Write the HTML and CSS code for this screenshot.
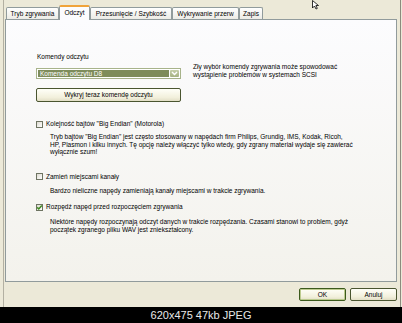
FILE: index.html
```html
<!DOCTYPE html>
<html lang="pl">
<head>
    <meta charset="UTF-8">
    <title>Odczyt</title>
    <link rel="stylesheet" href="styles.css">
</head>
<body>
  <div class="shot">
    <div class="dialog">
        <div class="tabs">
            <div class="tab t-tryb">Tryb zgrywania</div>
            <div class="tab t-odczyt active">Odczyt</div>
            <div class="tab t-przes">Przesunięcie / Szybkość</div>
            <div class="tab t-wykr">Wykrywanie przerw</div>
            <div class="tab t-zapis">Zapis</div>
        </div>

        <div class="panel">
            <div class="top-row">
                <div class="commands">
                    <div class="label">Komendy odczytu</div>
                    <div class="combo">
                        <span class="combo-value">Komenda odczytu D8</span>
                        <span class="combo-btn">
                            <svg width="7" height="5" viewBox="0 0 7 5"><path d="M1 1 L3.5 3.5 L6 1" fill="none" stroke="#fff" stroke-width="1.4"/></svg>
                        </span>
                    </div>
                    <div class="xp-btn wide">Wykryj teraz komendę odczytu</div>
                </div>
                <p class="hint">Zły wybór komendy zgrywania może spowodować<br>wystąpienie problemów w systemach SCSI</p>
            </div>

            <div class="check first"><span class="box"></span>Kolejność bajtów "Big Endian" (Motorola)</div>
            <p class="desc d1">Tryb bajtów "Big Endian" jest często stosowany w napędach firm Philips, Grundig, IMS, Kodak, Ricoh,<br>HP, Plasmon i kilku innych. Tę opcję należy włączyć tylko wtedy, gdy zgrany materiał wydaje się zawierać<br>wyłącznie szum!</p>

            <div class="check second"><span class="box"></span>Zamień miejscami kanały</div>
            <p class="desc d2">Bardzo nieliczne napędy zamieniają kanały miejscami w trakcie zgrywania.</p>

            <div class="check third">
                <span class="box checked">
                    <svg width="7" height="7" viewBox="0 0 7 7"><path d="M1.2 3.4 L2.8 5 L5.8 1.6" fill="none" stroke="#3d8a1e" stroke-width="1.5"/></svg>
                </span>Rozpędź napęd przed rozpoczęciem zgrywania
            </div>
            <p class="desc d3">Niektóre napędy rozpoczynają odczyt danych w trakcie rozpędzania. Czasami stanowi to problem, gdyż<br>początek zgranego pliku WAV jest zniekształcony.</p>
        </div>

        <div class="buttons">
            <div class="xp-btn default">OK</div>
            <div class="xp-btn">Anuluj</div>
        </div>

        <svg class="cursor" width="9" height="10" viewBox="0 0 9 10"><path d="M0.5 0.5 L0.5 8 L2.5 6 L4 9 L5.3 8.4 L3.9 5.5 L6.5 5.5 Z" fill="#fff" stroke="#000" stroke-width="0.8"/></svg>
    </div>
    <div class="caption">620x475 47kb JPEG</div>
  </div>
</body>
</html>
```

FILE: styles.css
```css
    html, body {
        margin: 0;
        padding: 0;
    }

    body {
        font-family: 'Liberation Sans', Arial, sans-serif;
        background-color: #000;
        width: 402px;
        height: 323px;
        overflow: hidden;
    }

    .shot {
        width: 402px;
        background-color: #ece9d8;
    }

    .dialog {
        position: relative;
        height: 307px;
        margin-left: 3px;
        margin-right: 1px;
        border-left: 1px solid #b3b0a2;
        border-right: 1px solid #8d8a7e;
        display: flex;
        flex-direction: column;
        font-size: 6.5px;
        color: #000;
    }

    .tabs {
        display: flex;
        align-items: flex-end;
        height: 14px;
        padding: 5px 0 0 2px;
    }

    .tab {
        box-sizing: border-box;
        height: 12px;
        line-height: 11px;
        text-align: center;
        border: 1px solid #919b9c;
        border-bottom: none;
        border-radius: 2px 2px 0 0;
        background: linear-gradient(#ffffff, #ecebe5);
        white-space: nowrap;
    }

    .t-tryb { width: 53px; }
    .t-odczyt { width: 31px; }
    .t-przes { width: 82px; }
    .t-wykr { width: 67px; }
    .t-zapis { width: 24px; }

    .tab.active {
        position: relative;
        z-index: 2;
        height: 15px;
        line-height: 12px;
        margin-bottom: -1px;
        border-top: 2px solid #f0a33a;
        background: #fcfcfe;
    }

    .panel {
        flex: 0 0 263px;
        height: 263px;
        box-sizing: border-box;
        margin: 0 3px 0 1px;
        border: 1px solid #919b9c;
        background: linear-gradient(#fcfcfe, #f3f2ec);
        padding-left: 30px;
    }

    .top-row {
        display: flex;
        margin-top: 33px;
    }

    .commands {
        width: 145px;
    }

    .label {
        line-height: 8px;
        padding-left: 1px;
    }

    .combo {
        display: flex;
        height: 11px;
        margin-top: 7px;
        box-sizing: border-box;
        border: 1px solid #a7b38a;
        background: #fff;
        padding: 1px;
    }

    .combo-value {
        flex: 1;
        background: #7e8c5a;
        color: #fff;
        line-height: 7px;
        padding-left: 2px;
    }

    .combo-btn {
        width: 9px;
        margin-left: 1px;
        background: linear-gradient(#c5cea9, #a6b283);
        border-radius: 1px;
        display: flex;
        align-items: center;
        justify-content: center;
    }

    .xp-btn {
        box-sizing: border-box;
        height: 14px;
        line-height: 12px;
        text-align: center;
        border: 1px solid #4a5530;
        border-radius: 2px;
        background: linear-gradient(#fffff8, #f2f0dc 70%, #e2dfc6);
    }

    .xp-btn.wide {
        margin-top: 9px;
    }

    .hint {
        margin: 10px 0 0 12px;
        line-height: 8px;
    }

    .check {
        display: flex;
        align-items: center;
        line-height: 8px;
        height: 8px;
    }

    .check.first { margin-top: 18px; }
    .check.second { margin-top: 17px; }
    .check.third { margin-top: 9px; }

    .box {
        width: 7px;
        height: 7px;
        box-sizing: border-box;
        border: 1px solid #6e7462;
        background: linear-gradient(135deg, #dcdad0, #ffffff);
        margin-right: 3px;
        display: flex;
        align-items: center;
        justify-content: center;
    }

    .box svg {
        flex: none;
    }

    .desc {
        margin: 0 0 0 14px;
        line-height: 7.5px;
    }

    .desc.d1 { margin-top: 5px; }
    .desc.d2 { margin-top: 6px; }
    .desc.d3 { margin-top: 7px; }

    .buttons {
        display: flex;
        justify-content: flex-end;
        gap: 4px;
        margin: 6px 3px 0 0;
    }

    .buttons .xp-btn {
        width: 47px;
        height: 13px;
        line-height: 11px;
    }

    .xp-btn.default {
        border-color: #3c5a1c;
        box-shadow: inset 0 0 0 1px #bccb8e;
    }

    .cursor {
        position: absolute;
        top: 0;
        left: 308px;
    }

    .caption {
        height: 16px;
        background: #000;
        color: #e8e8e8;
        font-size: 11px;
        line-height: 17px;
        text-align: center;
    }
```
